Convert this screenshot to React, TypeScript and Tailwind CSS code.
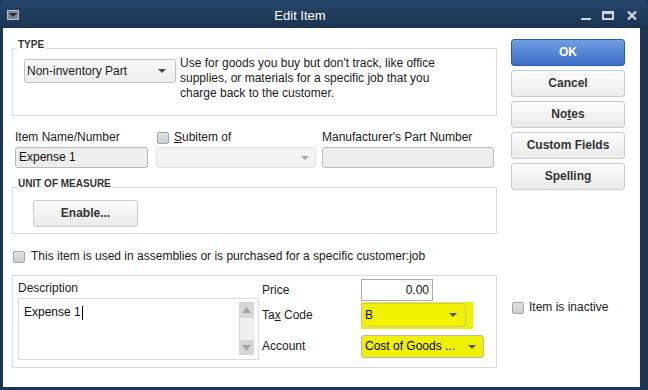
import type { ReactNode } from "react";

// small down arrow used in the dropdowns
const Arrow = ({ color = "#4a4a4a" }: { color?: string }) => (
  <svg width="8" height="4" viewBox="0 0 8 4">
    <path d="M0 0h8L4 4z" fill={color} />
  </svg>
);

const Check = () => (
  <span className="block w-[12px] h-[12px] shrink-0 rounded-[2px] border border-[#a5a5a5] bg-linear-to-b from-[#e2e2e2] to-[#cdcdcd]" />
);

const Btn = ({ children, primary }: { children: ReactNode; primary?: boolean }) => (
  <button
    className={
      primary
        ? "h-[27px] w-full rounded-[3px] border border-[#2d5aa8] bg-linear-to-b from-[#719fe3] to-[#3c6cc6] text-white font-bold text-[12px]"
        : "h-[27px] w-full rounded-[3px] border border-[#cacaca] bg-linear-to-b from-[#fdfdfd] to-[#eaeaea] text-[#333] font-bold text-[12px]"
    }
  >
    {children}
  </button>
);

export default function App() {
  return (
    <div className="w-[648px] h-[390px] bg-[#1b3553] flex flex-col font-['Liberation_Sans',Arial,sans-serif] text-[12px] leading-[15px] text-[#1b1b1b] overflow-hidden">
      {/* Title bar */}
      <div className="h-[28px] pt-[2px] flex items-center rounded-t-[5px] bg-linear-to-b from-[#26466b] to-[#1b3452]">
        <div className="ml-[7px] w-[12px] h-[10px] border border-[#b9bfc7] bg-[#7f8792] flex items-center justify-center">
          <Arrow color="#1b2b3f" />
        </div>
        <div className="flex-1 text-center text-white text-[13px]">Edit Item</div>
        <div className="flex items-center mr-[11px]">
          <div className="w-[10px] h-[2px] mt-[7px] bg-[#cfd4db]" />
          <div className="ml-[11px] w-[12px] h-[9px] border-2 border-t-[3px] border-[#cfd4db]" />
          <svg className="ml-[13px]" width="10" height="9" viewBox="0 0 10 9">
            <path d="M1 0.5l8 8M9 0.5l-8 8" stroke="#cfd4db" strokeWidth="2.4" />
          </svg>
        </div>
      </div>

      {/* Body */}
      <div className="flex-1 ml-[3px] mr-[8px] mb-[3px] bg-white flex">
        {/* Left column */}
        <div className="ml-[9px] w-[485px] flex flex-col">
          <fieldset className="mt-[12px] border border-[#dadada]">
            <legend className="ml-[4px] px-[1px] pb-[6px] leading-[10px] text-[10px] font-bold text-[#333]">TYPE</legend>
            <div className="flex items-start pl-[11px] pb-[14px]">
              <div className="mt-[3px] w-[152px] h-[24px] rounded-[3px] border border-[#c3c3c3] bg-linear-to-b from-[#fafafa] to-[#ececec] flex items-center pl-[2px] pr-[9px]">
                <span className="flex-1">Non-inventory Part</span>
                <Arrow />
              </div>
              <div className="ml-[4px]">
                Use for goods you buy but don't track, like office
                <br />
                supplies, or materials for a specific job that you
                <br />
                charge back to the customer.
              </div>
            </div>
          </fieldset>

          {/* name / subitem / manufacturer */}
          <div className="mt-[14px] ml-[3px] flex">
            <div className="w-[133px]">
              <div>Item Name/Number</div>
              <div className="mt-[2px] h-[21px] rounded-[3px] border border-[#b8b8b8] bg-[#eeeeee] flex items-center pl-[3px] text-[#111]">
                Expense 1
              </div>
            </div>
            <div className="ml-[8px] w-[160px]">
              <div className="flex items-center pl-[1px]">
                <Check />
                <span className="ml-[5px]">
                  <span className="underline">S</span>ubitem of
                </span>
              </div>
              <div className="mt-[2px] h-[21px] rounded-[3px] border border-[#e2e2e2] bg-[#f3f3f3] flex items-center justify-end pr-[6px]">
                <Arrow color="#a9a9a9" />
              </div>
            </div>
            <div className="ml-[6px] w-[172px]">
              <div>Manufacturer's Part Number</div>
              <div className="mt-[2px] h-[21px] rounded-[3px] border border-[#bdbdbd] bg-[#eeeeee]" />
            </div>
          </div>

          <fieldset className="mt-[11px] border border-[#dadada]">
            <legend className="ml-[4px] px-[1px] pb-[6px] leading-[10px] text-[10px] font-bold text-[#333]">UNIT OF MEASURE</legend>
            <div className="pt-[5px] pb-[6px] pl-[20px]">
              <button className="w-[105px] h-[27px] rounded-[3px] border border-[#cacaca] bg-linear-to-b from-[#fdfdfd] to-[#eaeaea] text-[#333] font-bold">
                Enable...
              </button>
            </div>
          </fieldset>

          <div className="mt-[15px] ml-[1px] flex items-center">
            <Check />
            <span className="ml-[6px]">This item is used in assemblies or is purchased for a specific customer:job</span>
          </div>

          {/* purchase / sales info */}
          <div className="mt-[11px] border border-[#dadada] flex">
            <div className="pl-[5px] pt-[5px] pb-[7px]">
              <div>Description</div>
              <div className="mt-[2px] w-[241px] h-[62px] border border-[#dcdcdc] flex justify-between">
                <div className="pl-[5px] pt-[6px] flex items-center h-[21px] text-[#111]">
                  Expense 1<span className="ml-[1px] w-[1px] h-[14px] bg-black" />
                </div>
                <div className="mt-[3px] mr-[4px] w-[15px] h-[53px] flex flex-col">
                  <div className="h-[16px] bg-[#d6d6d6] flex items-center justify-center">
                    <svg width="9" height="6" viewBox="0 0 9 6"><path d="M0 6h9L4.5 0z" fill="#a4a4a4" /></svg>
                  </div>
                  <div className="h-[22px] bg-[#efefef] border-l border-[#d6d6d6]" />
                  <div className="flex-1 bg-[#d6d6d6] flex items-center justify-center">
                    <svg width="9" height="6" viewBox="0 0 9 6"><path d="M0 0h9L4.5 6z" fill="#a4a4a4" /></svg>
                  </div>
                </div>
              </div>
            </div>
            <div className="ml-[3px] pt-[3px] flex flex-col">
              <div className="h-[22px] flex items-center">
                <span className="w-[99px]">Price</span>
                <div className="w-[72px] h-[22px] border border-[#ababab] flex items-center justify-end pr-[3px] text-[#111]">0.00</div>
              </div>
              <div className="mt-[2px] h-[24px] flex items-center">
                <span className="w-[99px]">
                  Ta<span className="underline">x</span> Code
                </span>
                <div className="w-[112px] h-[27px] -my-[2px] bg-[#eef200] flex items-center">
                  <div className="w-[105px] h-[24px] rounded-[3px] border border-[#c4c4a0] bg-[#f0f200] flex items-center pl-[3px] pr-[8px]">
                    <span className="flex-1 text-black">B</span>
                    <Arrow color="#555" />
                  </div>
                </div>
              </div>
              <div className="mt-[8px] h-[23px] flex items-center">
                <span className="w-[99px]">Account</span>
                <div className="w-[123px] h-[23px] rounded-[3px] border border-[#b8b8b8] bg-[#eef200] flex items-center pl-[3px] pr-[7px]">
                  <span className="flex-1 text-black">Cost of Goods ...</span>
                  <Arrow color="#555" />
                </div>
              </div>
            </div>
          </div>
        </div>

        {/* Right column */}
        <div className="ml-[14px] w-[114px] mt-[11px] flex flex-col">
          <div className="flex flex-col gap-[4px]">
            <Btn primary>OK</Btn>
            <Btn>Cancel</Btn>
            <Btn>
              No<span className="underline">t</span>es
            </Btn>
            <Btn>Custom Fields</Btn>
            <Btn>
              Spellin<span className="underline">g</span>
            </Btn>
          </div>
          <div className="mt-[110px] ml-[1px] flex items-center">
            <Check />
            <span className="ml-[5px]">Item is inactive</span>
          </div>
        </div>
      </div>
    </div>
  );
}
